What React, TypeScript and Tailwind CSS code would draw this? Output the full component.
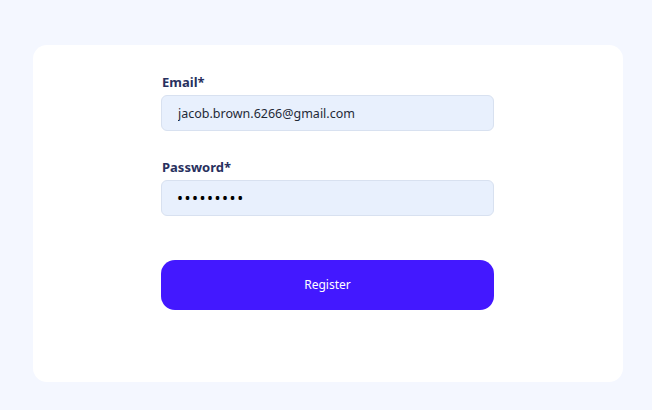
export default function App() {
  return (
    <div className="w-[652px] h-[410px] bg-[#f4f7ff] pt-[45px] pl-[33px] font-['Noto_Sans',sans-serif]">
      <div className="w-[590px] h-[337px] bg-white rounded-[14px] pl-[128px] pt-[27px]">
        <form className="w-[333px] flex flex-col">
          <label className="text-[13px] leading-[20px] font-bold text-[#28305e] pl-px">Email*</label>
          <input
            type="email"
            defaultValue="jacob.brown.6266@gmail.com"
            className="mt-[3px] h-[36px] rounded-[6px] bg-[#e8f0fd] border border-[#d8e1f0] px-[16px] text-[12.5px] text-[#1f2937] outline-none"
          />
          <label className="mt-[26px] text-[13px] leading-[20px] font-bold text-[#28305e] pl-px">Password*</label>
          <input
            type="password"
            defaultValue="123456789"
            className="mt-[3px] h-[36px] rounded-[6px] bg-[#e8f0fd] border border-[#d8e1f0] px-[15px] text-[16px] tracking-[1.5px] text-black outline-none"
          />
          <button
            type="button"
            className="mt-[44px] h-[50px] rounded-[14px] bg-[#4318ff] text-white text-[12px]"
          >
            Register
          </button>
        </form>
      </div>
    </div>
  );
}
